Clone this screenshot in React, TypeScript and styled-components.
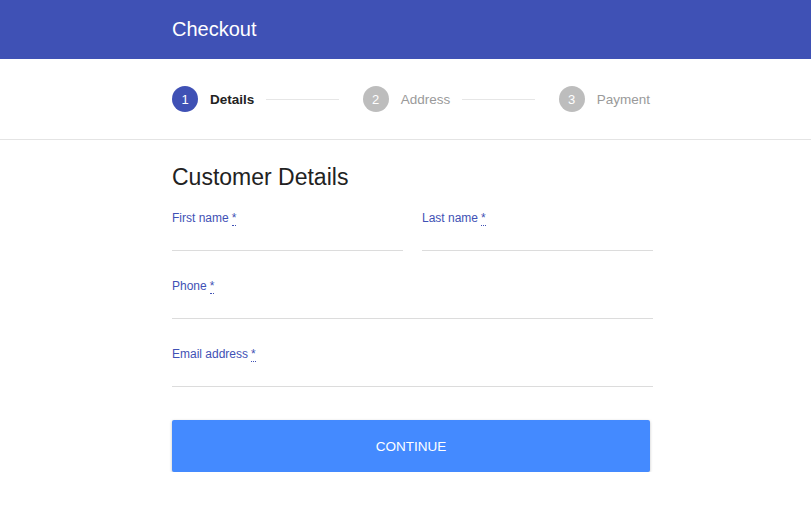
import React from "react";
import styled, { createGlobalStyle } from "styled-components";

const Global = createGlobalStyle`
  html, body { margin: 0; padding: 0; background: #fff; }
  body { font-family: "Liberation Sans", Arial, Helvetica, sans-serif; }
  * { box-sizing: border-box; }
`;

const Header = styled.header`
  height: 59px;
  background: #3f51b5;
  display: flex;
  align-items: center;
  padding-left: 172px;
`;

const Title = styled.h1`
  margin: 0;
  font-size: 20px;
  font-weight: 400;
  color: #fff;
`;

const StepperBar = styled.nav`
  height: 81px;
  border-bottom: 1px solid #e4e4e4;
  display: flex;
  align-items: center;
  padding-left: 172px;
`;

const StepList = styled.div`
  width: 478px;
  display: flex;
  align-items: center;
`;

const Step = styled.div`
  display: flex;
  align-items: center;
  gap: 12px;
`;

const Circle = styled.span<{ $active?: boolean }>`
  width: 26px;
  height: 26px;
  border-radius: 50%;
  background: ${(p) => (p.$active ? "#3f51b5" : "#bdbdbd")};
  color: #fff;
  font-size: 13px;
  display: flex;
  align-items: center;
  justify-content: center;
`;

const StepLabel = styled.span<{ $active?: boolean }>`
  font-size: 13.5px;
  font-weight: ${(p) => (p.$active ? 700 : 400)};
  color: ${(p) => (p.$active ? "#222" : "#9a9a9a")};
`;

const Connector = styled.span`
  flex: 1;
  height: 1px;
  background: #e6e6e6;
  margin: 0 24px 0 12px;
`;

const Form = styled.form`
  padding: 23px 0 0 172px;
  width: 653px;
`;

const Heading = styled.h2`
  margin: 0 0 20px;
  font-size: 23px;
  line-height: 28px;
  font-weight: 400;
  color: #222;
`;

const Row = styled.div`
  display: flex;
  gap: 19px;
  margin-bottom: 28px;
`;

const Field = styled.label`
  flex: 1;
  display: flex;
  flex-direction: column;
`;

const Label = styled.span`
  font-size: 12px;
  line-height: 14px;
  color: #3f51b5;
`;

const Req = styled.abbr`
  text-decoration: none;
  border-bottom: 1px dotted #3f51b5;
  margin-left: 3px;
  line-height: 10px;
`;

const Input = styled.input`
  height: 26px;
  border: none;
  border-bottom: 1px solid #dcdcdc;
  outline: none;
  font: inherit;
  font-size: 14px;
  padding: 0;
  background: transparent;
`;

const Button = styled.button`
  margin-top: 5px;
  width: 478px;
  height: 52px;
  border: none;
  border-radius: 2px;
  background: #448aff;
  color: #fff;
  font-family: inherit;
  font-size: 13.5px;
  text-transform: uppercase;
  box-shadow: 0 1px 3px rgba(0, 0, 0, 0.25);
  cursor: pointer;
`;

const steps = ["Details", "Address", "Payment"];

export default function App() {
  return (
    <>
      <Global />
      <Header>
        <Title>Checkout</Title>
      </Header>
      <StepperBar>
        <StepList>
          {steps.map((s, i) => (
            <React.Fragment key={s}>
              <Step>
                <Circle $active={i === 0}>{i + 1}</Circle>
                <StepLabel $active={i === 0}>{s}</StepLabel>
              </Step>
              {i < steps.length - 1 && <Connector />}
            </React.Fragment>
          ))}
        </StepList>
      </StepperBar>
      <Form onSubmit={(e) => e.preventDefault()}>
        <Heading>Customer Details</Heading>
        <Row>
          <Field>
            <Label>
              First name<Req title="required">*</Req>
            </Label>
            <Input />
          </Field>
          <Field>
            <Label>
              Last name<Req title="required">*</Req>
            </Label>
            <Input />
          </Field>
        </Row>
        <Row>
          <Field>
            <Label>
              Phone<Req title="required">*</Req>
            </Label>
            <Input />
          </Field>
        </Row>
        <Row>
          <Field>
            <Label>
              Email address<Req title="required">*</Req>
            </Label>
            <Input />
          </Field>
        </Row>
        <Button type="submit">Continue</Button>
      </Form>
    </>
  );
}
